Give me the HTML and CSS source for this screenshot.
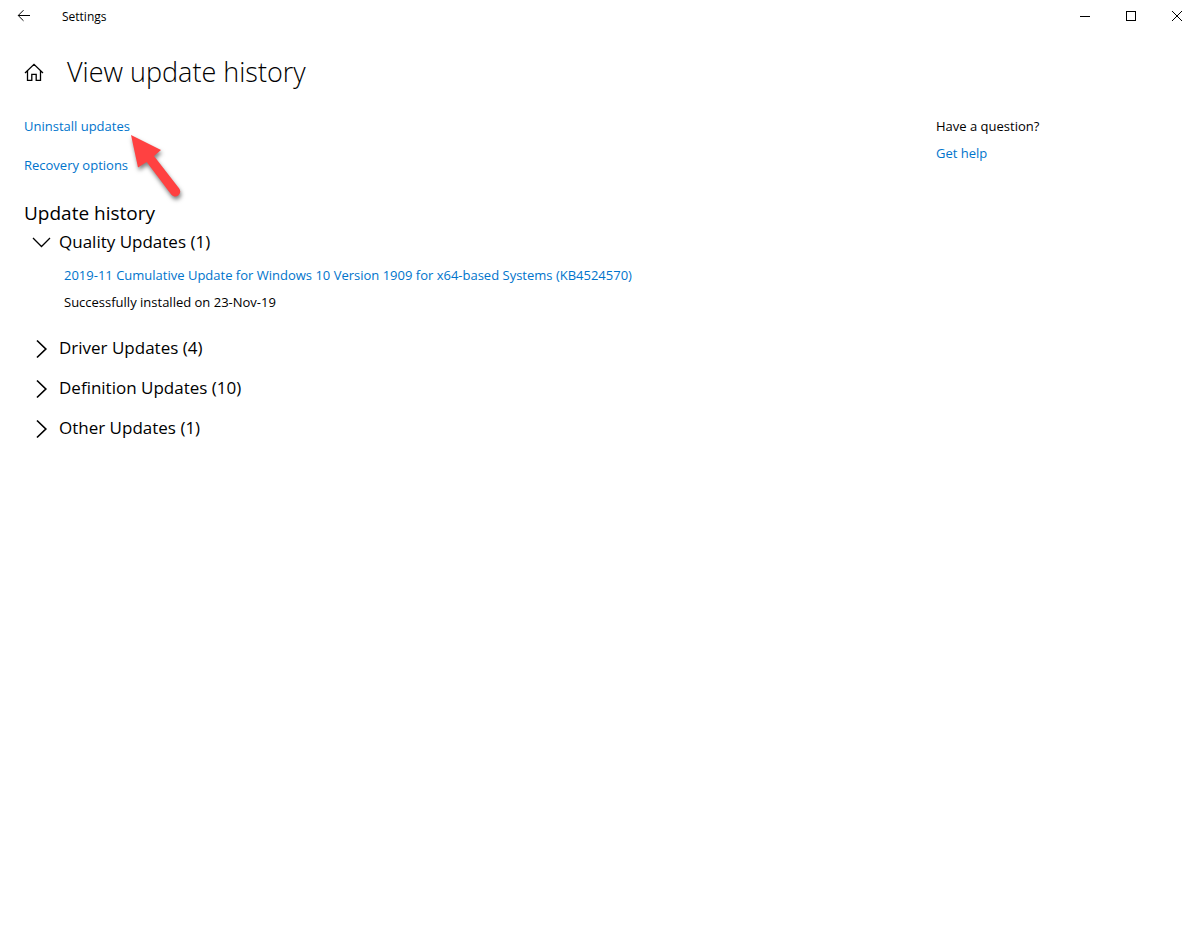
FILE: index.html
```html
<!DOCTYPE html>
<html lang="en">
<head>
    <meta charset="UTF-8">
    <meta name="viewport" content="width=device-width, initial-scale=1.0">
    <title>Settings</title>
    <link rel="stylesheet" href="styles.css">
</head>
<body>
    <div class="titlebar">
        <button class="back" aria-label="Back">
            <svg width="14" height="12" viewBox="0 0 14 12"><path d="M13 5.5H1.2M6.5 0.2L1.2 5.5L6.5 10.8"/></svg>
        </button>
        <span class="app-name">Settings</span>
        <div class="window-buttons">
            <button aria-label="Minimize">
                <svg width="10" height="10" viewBox="0 0 10 10" shape-rendering="crispEdges"><path d="M0 5.5H10"/></svg>
            </button>
            <button aria-label="Maximize">
                <svg width="10" height="10" viewBox="0 0 10 10" shape-rendering="crispEdges"><path d="M0.5 0.5H9.5V9.5H0.5Z"/></svg>
            </button>
            <button aria-label="Close">
                <svg width="10" height="10" viewBox="0 0 10 10"><path d="M0 0L10 10M10 0L0 10"/></svg>
            </button>
        </div>
    </div>

    <header class="page-header">
        <button class="home" aria-label="Home">
            <svg width="20" height="20" viewBox="0 0 20 20"><path d="M1 11L10 2.4L19 11M3.500 9V18.300H7.800V12.300H12.200V18.300H16.500V9"/></svg>
        </button>
        <h1>View update history</h1>
    </header>

    <div class="content">
        <main>
            <div class="links">
                <div class="uninstall">
                    <a href="#">Uninstall updates</a>
                    <svg class="pointer" width="60" height="74" viewBox="0 0 60 74"><path d="M1 3L31 18L24 24L49.200 56.500A5 5 0 0 1 41.200 62.500L16.700 30L8 35.500Z"/></svg>
                </div>
                <a href="#">Recovery options</a>
            </div>

            <h2>Update history</h2>
            <details open>
                <summary>
                    <svg class="chevron" width="20" height="20" viewBox="0 0 20 20"><path d="M1 6L9.500 14.500L18 6"/></svg>
                    Quality Updates (1)
                </summary>
                <div class="update">
                    <a href="#">2019-11 Cumulative Update for Windows 10 Version 1909 for x64-based Systems (KB4524570)</a>
                    <p>Successfully installed on 23-Nov-19</p>
                </div>
            </details>
            <details>
                <summary>
                    <svg class="chevron closed" width="20" height="20" viewBox="0 0 20 20"><path d="M5 2.500L13.800 11L5 19.500"/></svg>
                    Driver Updates (4)
                </summary>
            </details>
            <details>
                <summary>
                    <svg class="chevron closed" width="20" height="20" viewBox="0 0 20 20"><path d="M5 2.500L13.800 11L5 19.500"/></svg>
                    Definition Updates (10)
                </summary>
            </details>
            <details>
                <summary>
                    <svg class="chevron closed" width="20" height="20" viewBox="0 0 20 20"><path d="M5 2.500L13.800 11L5 19.500"/></svg>
                    Other Updates (1)
                </summary>
            </details>
        </main>

        <aside>
            <p>Have a question?</p>
            <a href="#">Get help</a>
        </aside>
    </div>
</body>
</html>
```
FILE: styles.css
```css
* {
    box-sizing: border-box;
}
body {
    margin: 0;
    background-color: #fff;
    color: #000;
    font-family: "Segoe UI", "Open Sans", sans-serif;
    font-size: 13px;
    line-height: 20px;
}
h1, h2, p {
    margin: 0;
    font-weight: normal;
}
a {
    color: #0074cc;
    text-decoration: none;
}
a:hover {
    color: #666;
}
button {
    display: flex;
    align-items: center;
    justify-content: center;
    padding: 0;
    border: none;
    background: none;
}
svg {
    display: block;
    flex: none;
    fill: none;
    stroke: #000;
    overflow: visible;
}

/* Title bar */
.titlebar {
    display: flex;
    align-items: center;
    height: 32px;
}
.back {
    width: 48px;
    height: 32px;
}
.app-name {
    padding: 2px 0 0 14px;
    font-size: 12px;
}
.window-buttons {
    display: flex;
    margin-left: auto;
}
.window-buttons button {
    width: 46px;
    height: 32px;
}

/* Page heading */
.page-header {
    display: flex;
    align-items: center;
    gap: 23px;
    padding: 20px 24px 24px;
}
.home {
    width: 20px;
    height: 40px;
}
.home svg {
    stroke-width: 1.3;
}
h1 {
    font-size: 27px;
    font-weight: 300;
    line-height: 40px;
}

/* Main column and help column */
.content {
    display: flex;
    padding: 0 24px;
}
main {
    flex: 1;
}
aside {
    display: flex;
    flex-direction: column;
    align-items: flex-start;
    gap: 7px;
    width: 240px;
}
.links {
    display: flex;
    flex-direction: column;
    align-items: flex-start;
    gap: 19px;
}
.uninstall {
    position: relative;
}
.pointer {
    position: absolute;
    top: 16px;
    left: 100%;
    fill: #ff4141;
    stroke: none;
    filter: drop-shadow(1px 3px 2px rgba(0, 0, 0, 0.5));
    pointer-events: none;
}
h2 {
    margin: 24px 0 1px;
    font-size: 19px;
    line-height: 28px;
}

/* Update groups */
details {
    margin-bottom: 12px;
}
details[open] {
    margin-bottom: 22px;
}
summary {
    display: flex;
    align-items: center;
    gap: 7px;
    padding-left: 8px;
    font-size: 17px;
    line-height: 28px;
    list-style: none;
    cursor: pointer;
}
.chevron {
    stroke-width: 1.3;
}
.closed {
    stroke-width: 1.7;
}
.update {
    display: flex;
    flex-direction: column;
    align-items: flex-start;
    gap: 7px;
    padding: 9px 0 0 40px;
}
```
